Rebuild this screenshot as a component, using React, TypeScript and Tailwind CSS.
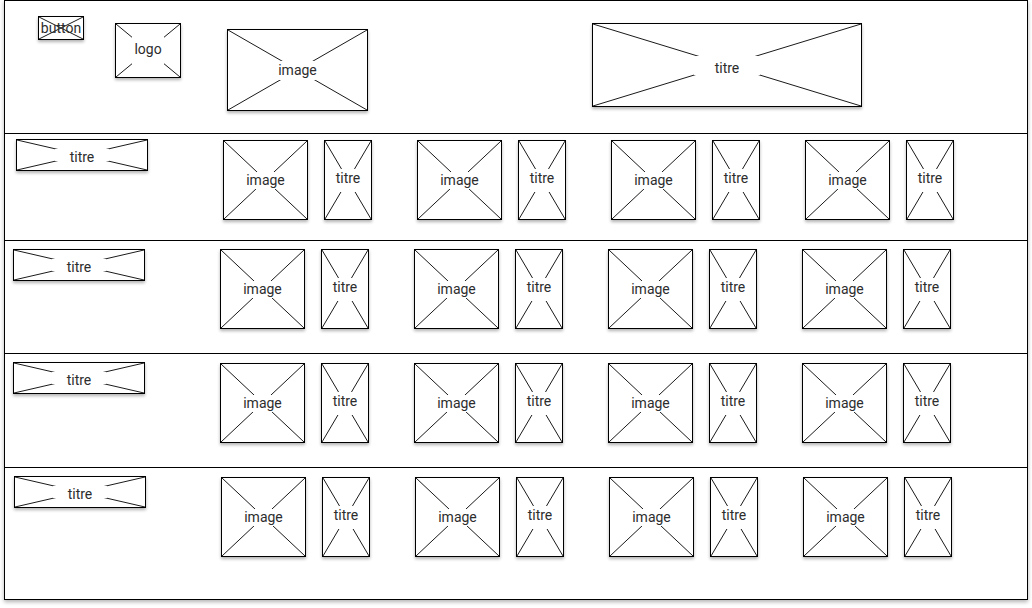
type BoxProps = {
  label: string;
  className: string;
  cut?: string;
  shift?: string;
  plain?: boolean;
};

// wireframe placeholder: crossed box with a centred label
function Placeholder({ label, className, cut = "h-[19px]", shift = "", plain }: BoxProps) {
  return (
    <div
      className={`relative shrink-0 border border-black bg-white shadow-[0_2px_3px_rgba(0,0,0,0.3)] ${className}`}
    >
      <svg
        className="absolute inset-0 h-full w-full"
        viewBox="0 0 100 100"
        preserveAspectRatio="none"
      >
        <line x1="0" y1="0" x2="100" y2="100" stroke="#1a1a1a" strokeWidth="1" vectorEffect="non-scaling-stroke" />
        <line x1="100" y1="0" x2="0" y2="100" stroke="#1a1a1a" strokeWidth="1" vectorEffect="non-scaling-stroke" />
      </svg>
      <div className="absolute inset-0 flex items-center justify-center">
        <span
          className={`flex items-center justify-center px-[3px] text-[14px] leading-none text-[#2d2d2d] ${plain ? "" : "bg-white"} ${cut}`}
        >
          <span className={shift}>{label}</span>
        </span>
      </div>
    </div>
  );
}

function Group({ top }: { top: string }) {
  return (
    <div className={`flex gap-[16px] ${top}`}>
      <Placeholder label="image" className="h-[80px] w-[85px]" cut="h-[17px]" />
      <Placeholder label="titre" className="h-[80px] w-[48px]" cut="h-[23px]" shift="-translate-y-[2px]" />
    </div>
  );
}

type RowProps = {
  height: string;
  pad: string;
  titleTop: string;
  groupTop: string;
  last?: boolean;
};

function Row({ height, pad, titleTop, groupTop, last }: RowProps) {
  return (
    <div className={`flex items-start ${height} ${pad} ${last ? "" : "border-b border-black"}`}>
      <Placeholder
        label="titre"
        className={`h-[32px] w-[132px] ${titleTop}`}
        cut="h-[12px] w-[54px]"
        shift="translate-y-[2px]"
      />
      <div className="ml-[75px] flex gap-[45px]">
        <Group top={groupTop} />
        <Group top={groupTop} />
        <Group top={groupTop} />
        <Group top={groupTop} />
      </div>
    </div>
  );
}

export default function App() {
  return (
    <div className="h-[608px] w-[1032px] bg-white font-['Roboto',sans-serif]">
      <div className="ml-[4px] flex h-[600px] w-[1024px] flex-col border border-black bg-white shadow-[0_2px_4px_rgba(0,0,0,0.3)]">
        {/* Header */}
        <div className="flex h-[133px] shrink-0 items-start border-b border-black">
          <Placeholder label="button" className="ml-[33px] mt-[15px] h-[24px] w-[46px]" plain />
          <Placeholder
            label="logo"
            className="ml-[31px] mt-[22px] h-[55px] w-[66px]"
            cut="h-[27px] w-[32px]"
            shift="-translate-y-[2px]"
          />
          <Placeholder label="image" className="ml-[46px] mt-[28px] h-[82px] w-[141px]" cut="h-[19px]" />
          <Placeholder
            label="titre"
            className="ml-[224px] mt-[22px] h-[84px] w-[270px]"
            cut="h-[19px] w-[66px]"
            shift="translate-y-[3px]"
          />
        </div>

        {/* Rows */}
        <Row height="h-[107px]" pad="pl-[11px]" titleTop="mt-[5px]" groupTop="mt-[6px]" />
        <Row height="h-[113px]" pad="pl-[8px]" titleTop="mt-[8px]" groupTop="mt-[8px]" />
        <Row height="h-[114px]" pad="pl-[8px]" titleTop="mt-[8px]" groupTop="mt-[9px]" />
        <Row height="h-[131px]" pad="pl-[9px]" titleTop="mt-[8px]" groupTop="mt-[9px]" last />
      </div>
    </div>
  );
}
